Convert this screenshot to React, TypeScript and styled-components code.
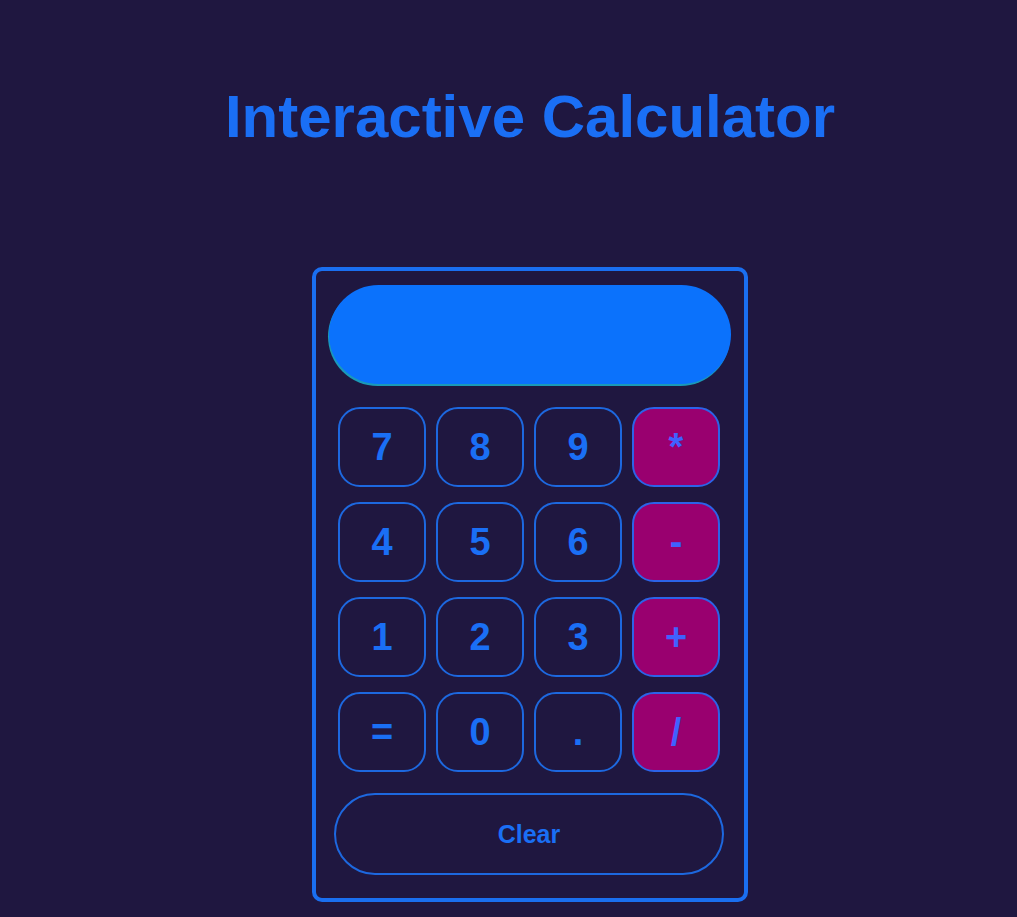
import styled, { createGlobalStyle } from "styled-components";

const GlobalStyle = createGlobalStyle`
  html, body {
    margin: 0;
    padding: 0;
    background: #1f1740;
  }
  body {
    font-family: "Liberation Sans", Arial, sans-serif;
  }
`;

const Page = styled.div`
  min-height: 917px;
  display: flex;
  flex-direction: column;
  align-items: center;
  padding: 82px 0 0 43px;
  box-sizing: border-box;
`;

const Title = styled.h1`
  margin: 0 0 116px;
  font-size: 60px;
  line-height: 69px;
  font-weight: 700;
  color: #1a6ff5;
`;

const Calculator = styled.div`
  width: 436px;
  box-sizing: border-box;
  border: 4px solid #1a6ff0;
  border-radius: 10px;
  padding: 14px 14px 23px 12px;
  display: flex;
  flex-direction: column;
  align-items: center;
`;

const Display = styled.div`
  width: 402px;
  height: 99px;
  box-sizing: border-box;
  border-radius: 50px;
  background: #0b72fc;
  box-shadow: -1px 2px 0 #1a9ab8;
  margin-left: 2px;
`;

const Keys = styled.div`
  margin-top: 23px;
  display: grid;
  grid-template-columns: repeat(4, 88px);
  grid-auto-rows: 80px;
  column-gap: 10px;
  row-gap: 15px;
`;

const Key = styled.button<{ $op?: boolean }>`
  box-sizing: border-box;
  border: 2px solid ${(p) => (p.$op ? "#2c63e8" : "#1d68df")};
  border-radius: 22px;
  background: ${(p) => (p.$op ? "#99006f" : "transparent")};
  color: ${(p) => (p.$op ? "#3f61ff" : "#1a6ff5")};
  font-family: "Liberation Sans", Arial, sans-serif;
  font-weight: 700;
  font-size: 38px;
  padding: 0;
  cursor: pointer;
`;

const ClearButton = styled.button`
  margin-top: 21px;
  width: 390px;
  height: 82px;
  box-sizing: border-box;
  border: 2px solid #1d68df;
  border-radius: 41px;
  background: transparent;
  color: #1a6ff5;
  font-family: "Liberation Sans", Arial, sans-serif;
  font-weight: 700;
  font-size: 25px;
  cursor: pointer;
`;

const keys = ["7", "8", "9", "*", "4", "5", "6", "-", "1", "2", "3", "+", "=", "0", ".", "/"];
const ops = ["*", "-", "+", "/"];

export default function App() {
  return (
    <>
      <GlobalStyle />
      <Page>
        <Title>Interactive Calculator</Title>
        <Calculator>
          <Display />
          <Keys>
            {keys.map((k) => (
              <Key key={k} $op={ops.includes(k)}>
                {k}
              </Key>
            ))}
          </Keys>
          <ClearButton>Clear</ClearButton>
        </Calculator>
      </Page>
    </>
  );
}
